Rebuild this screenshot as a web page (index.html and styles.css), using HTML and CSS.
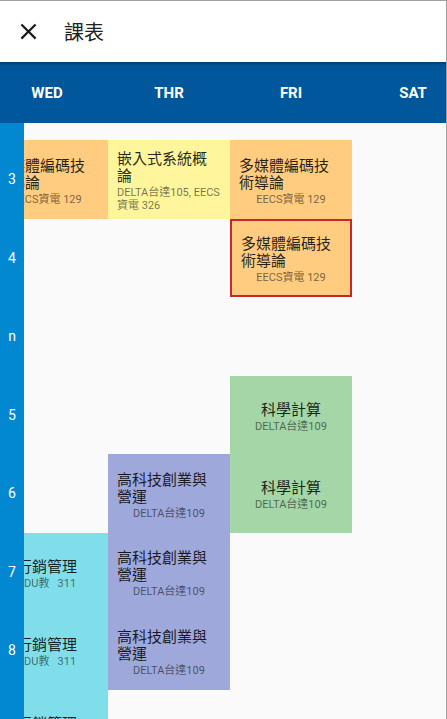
FILE: index.html
```html
<!DOCTYPE html>
<html lang="zh-Hant">
<head>
<meta charset="utf-8">
<title>課表</title>
<link rel="stylesheet" href="styles.css">
</head>
<body>
<div class="screen">
  <header class="appbar">
    <svg class="close" viewBox="0 0 24 24" aria-hidden="true"><path d="M19 6.41L17.59 5 12 10.59 6.41 5 5 6.41 10.59 12 5 17.59 6.41 19 12 13.41 17.59 19 19 17.59 13.41 12z"/></svg>
    <h1 class="title">課表</h1>
  </header>
  <nav class="days">
    <div class="day">WED</div>
    <div class="day">THR</div>
    <div class="day">FRI</div>
    <div class="day">SAT</div>
  </nav>
  <main class="timetable">
    <div class="times">
      <div class="time"></div>
      <div class="time">3</div>
      <div class="time">4</div>
      <div class="time">n</div>
      <div class="time">5</div>
      <div class="time">6</div>
      <div class="time">7</div>
      <div class="time">8</div>
      <div class="time"></div>
    </div>
    <div class="viewport">
      <div class="grid">
        <div class="cell orange c-wed r3"><div class="cell-title">多媒體編碼技術導論</div><div class="cell-room">EECS資電 129</div></div>
        <div class="cell yellow c-thr r3"><div class="cell-title">嵌入式系統概論</div><div class="cell-room">DELTA台達105, EECS資電 326</div></div>
        <div class="cell orange c-fri r3"><div class="cell-title">多媒體編碼技術導論</div><div class="cell-room">EECS資電 129</div></div>
        <div class="cell orange selected c-fri r4"><div class="cell-title">多媒體編碼技術導論</div><div class="cell-room">EECS資電 129</div></div>
        <div class="cell green c-fri r5"><div class="cell-title">科學計算</div><div class="cell-room">DELTA台達109</div></div>
        <div class="cell green c-fri r6"><div class="cell-title">科學計算</div><div class="cell-room">DELTA台達109</div></div>
        <div class="cell indigo c-thr r6"><div class="cell-title">高科技創業與營運</div><div class="cell-room">DELTA台達109</div></div>
        <div class="cell indigo c-thr r7"><div class="cell-title">高科技創業與營運</div><div class="cell-room">DELTA台達109</div></div>
        <div class="cell indigo c-thr r8"><div class="cell-title">高科技創業與營運</div><div class="cell-room">DELTA台達109</div></div>
        <div class="cell cyan c-wed r7"><div class="cell-title">行銷管理</div><div class="cell-room">EDU教&nbsp;&nbsp;&nbsp;311</div></div>
        <div class="cell cyan c-wed r8"><div class="cell-title">行銷管理</div><div class="cell-room">EDU教&nbsp;&nbsp;&nbsp;311</div></div>
        <div class="cell cyan c-wed r9"><div class="cell-title">行銷管理</div><div class="cell-room">EDU教&nbsp;&nbsp;&nbsp;311</div></div>
      </div>
    </div>
  </main>
</div>
</body>
</html>
```
FILE: styles.css
```css
html, body {
  margin: 0;
  padding: 0;
  background: #fafafa;
}

body {
  font-family: Roboto, "Noto Sans CJK TC", sans-serif;
}

.screen {
  width: 447px;
  height: 719px;
  box-sizing: border-box;
  border-top: 1px solid #a0a0a0;
  border-right: 1px solid #a0a0a0;
  overflow: hidden;
  display: flex;
  flex-direction: column;
  background: #fafafa;
}

.appbar {
  flex: none;
  height: 61px;
  background: #ffffff;
  display: flex;
  align-items: center;
  gap: 22px;
  padding-left: 15px;
}

.close {
  width: 27px;
  height: 27px;
  fill: #1a1a1a;
  flex: none;
}

.title {
  margin: 0;
  font-family: "Noto Sans CJK TC", sans-serif;
  font-weight: 400;
  font-size: 20px;
  line-height: 24px;
  color: #212121;
}

.days {
  flex: none;
  height: 61px;
  margin-left: -14px;
  display: flex;
  background: #01579b;
  box-shadow: inset 0 3px 3px -1px rgba(0, 0, 0, 0.28);
}

.day {
  flex: none;
  width: 122px;
  display: flex;
  align-items: center;
  justify-content: center;
  color: #ffffff;
  font-family: Roboto, sans-serif;
  font-weight: 700;
  font-size: 15px;
}

.timetable {
  flex: 1;
  min-height: 0;
  display: flex;
}

.times {
  flex: none;
  width: 24px;
  background: #0288d1;
  display: grid;
  grid-template-rows: 17px repeat(8, 78.5px);
  align-content: start;
  color: #ffffff;
  font-family: Roboto, sans-serif;
  font-size: 14px;
}

.time {
  display: flex;
  align-items: center;
  justify-content: center;
}

.viewport {
  flex: 1;
  min-width: 0;
  overflow: hidden;
}

.grid {
  width: 488px;
  margin-left: -38px;
  display: grid;
  grid-template-columns: repeat(4, 122px);
  grid-template-rows: 17px repeat(8, 78.5px);
}

.cell {
  box-sizing: border-box;
  padding: 3px 9px 0;
  display: flex;
  flex-direction: column;
  align-items: center;
  justify-content: center;
  min-width: 0;
}

.cell-title {
  font-family: "Noto Sans CJK TC", sans-serif;
  font-size: 15px;
  line-height: 17px;
  color: rgba(0, 0, 0, 0.85);
}

.cell-room {
  margin-top: 3px;
  font-family: Roboto, "Noto Sans CJK TC", sans-serif;
  font-size: 11px;
  line-height: 13px;
  color: rgba(0, 0, 0, 0.55);
}

.orange { background: #ffcc80; }
.yellow { background: #fff59d; }
.green { background: #a5d6a7; }
.indigo { background: #9fa8da; }
.cyan { background: #80deea; }

.selected {
  border: 2px solid #c62828;
}

.c-wed { grid-column: 1; }
.c-thr { grid-column: 2; }
.c-fri { grid-column: 3; }

.r3 { grid-row: 2; }
.r4 { grid-row: 3; }
.r5 { grid-row: 5; }
.r6 { grid-row: 6; }
.r7 { grid-row: 7; }
.r8 { grid-row: 8; }
.r9 { grid-row: 9; }
```
